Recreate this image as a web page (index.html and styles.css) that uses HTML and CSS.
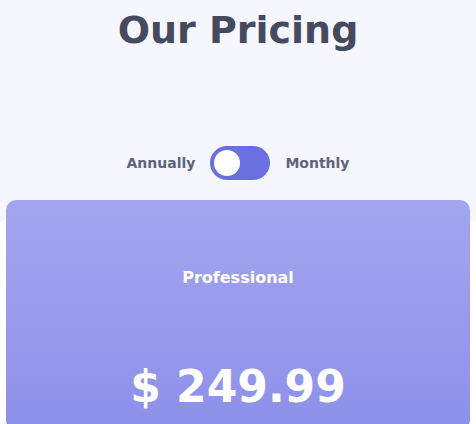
FILE: index.html
```html
<!DOCTYPE html>
<html>
<head>
<meta charset="utf-8">
<link rel="stylesheet" href="styles.css">
</head>
<body>
<main class="pricing">
  <h1 class="title">Our Pricing</h1>
  <div class="switcher">
    <span class="label">Annually</span>
    <span class="toggle"><span class="knob"></span></span>
    <span class="label">Monthly</span>
  </div>
  <div class="cards">
    <section class="card">
      <h2 class="plan">Professional</h2>
      <div class="price">$ 249.99</div>
    </section>
  </div>
</main>
</body>
</html>
```
FILE: styles.css
```css
* { box-sizing: border-box; }
html, body { margin: 0; padding: 0; overflow: hidden; }
body {
  background: #f5f6fe;
  font-family: "DejaVu Sans", "Open Sans", sans-serif;
  width: 476px;
  height: 424px;
}
.pricing {
  display: flex;
  flex-direction: column;
  align-items: center;
}
.title {
  margin: 6px 0 0;
  font-size: 38px;
  line-height: 48px;
  font-weight: 700;
  color: #464a5e;
}
.switcher {
  margin-top: 92px;
  display: flex;
  align-items: center;
  gap: 15px;
}
.label {
  font-size: 14px;
  font-weight: 700;
  color: #5f6379;
}
.toggle {
  width: 60px;
  height: 34px;
  border-radius: 17px;
  background: #6b70e0;
  display: flex;
  align-items: center;
  padding-left: 4px;
}
.knob {
  width: 26px;
  height: 26px;
  border-radius: 50%;
  background: #fff;
}
.cards {
  position: relative;
  width: 100%;
  margin-top: 20px;
  padding: 0 6px;
}
.cards::before {
  content: "";
  position: absolute;
  left: -10px;
  right: -10px;
  top: 18px;
  height: 300px;
  background: #fff;
  border-radius: 24px;
}
.card {
  position: relative;
  height: 230px;
  border-radius: 10px;
  background: linear-gradient(180deg, #a3a6ef 0%, #8d90e9 100%);
  display: flex;
  flex-direction: column;
  align-items: center;
  color: #fff;
}
.plan {
  margin: 68px 0 0;
  font-size: 16px;
  font-weight: 700;
}
.price {
  margin-top: 74px;
  font-size: 44px;
  line-height: 52px;
  font-weight: 700;
}
```
